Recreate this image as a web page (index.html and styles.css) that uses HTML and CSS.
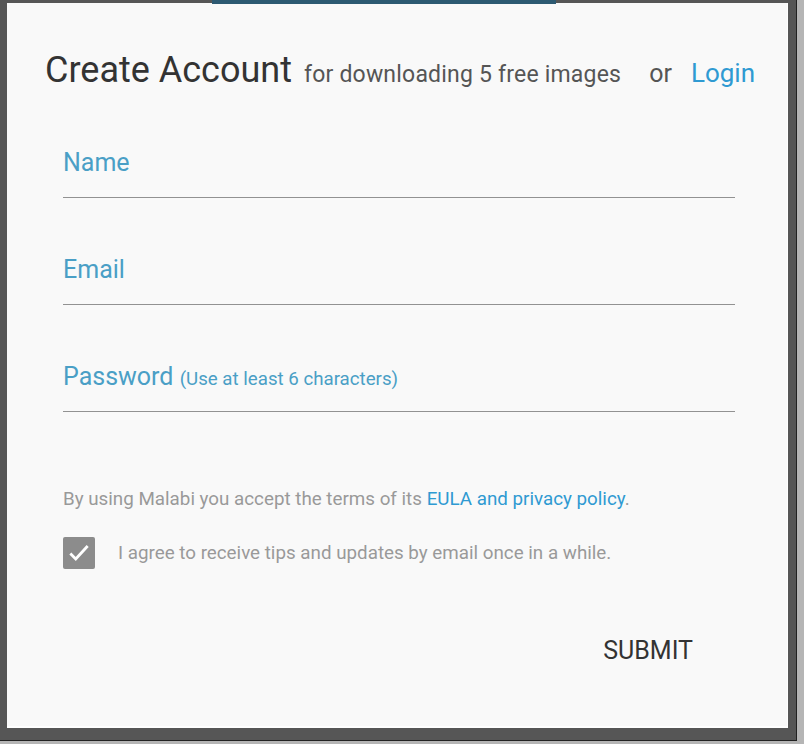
FILE: index.html
```html
<!DOCTYPE html>
<html lang="en">
<head>
  <meta charset="UTF-8">
  <meta name="viewport" content="width=device-width, initial-scale=1.0">
  <title>Create Account</title>
  <link rel="stylesheet" href="styles.css">
</head>
<body>
  <div class="frame">
    <div class="peek"></div>
    <div class="modal">
      <div class="header">
        <h1>Create Account</h1>
        <span class="subtitle">for downloading 5 free images</span>
        <span class="or">or</span>
        <a class="login" href="#">Login</a>
      </div>

      <div class="field">
        <label>Name</label>
      </div>
      <div class="field">
        <label>Email</label>
      </div>
      <div class="field">
        <label>Password <small>(Use at least 6 characters)</small></label>
      </div>

      <p class="terms">By using Malabi you accept the terms of its <a href="#">EULA and privacy policy</a>.</p>

      <div class="agree">
        <span class="checkbox">
          <svg width="26" height="26" viewBox="0 0 24 24"><path d="M4 12.5l5 5L20 5.5" fill="none" stroke="#fff" stroke-width="2.6"/></svg>
        </span>
        <span>I agree to receive tips and updates by email once in a while.</span>
      </div>

      <div class="actions">
        <button>SUBMIT</button>
      </div>
    </div>
  </div>
</body>
</html>
```

FILE: styles.css
```css
html, body {
  margin: 0;
  padding: 0;
  height: 100%;
}
body {
  font-family: Roboto, "Liberation Sans", Arial, sans-serif;
  background-color: #b5b5b5;
  position: relative;
  overflow: hidden;
}
.frame {
  position: absolute;
  top: 0;
  left: 0;
  width: 797px;
  height: 741px;
  padding: 3px 8px 12px 7px;
  box-sizing: border-box;
  background-color: #565656;
  border-right: 1px solid #222;
  border-bottom: 1px solid #222;
}
.peek {
  position: absolute;
  top: 0;
  left: 212px;
  width: 344px;
  height: 4px;
  background-color: #2d5a72;
}
.modal {
  background-color: #f9f9f9;
  height: 100%;
  box-sizing: border-box;
  padding: 46px 52px 0 38px;
  border-right: 1px solid #fff;
  border-bottom: 2px solid #fff;
}
.header {
  display: flex;
  align-items: baseline;
  white-space: nowrap;
}
h1 {
  font-size: 36px;
  font-weight: 400;
  color: #333;
  margin: 0;
}
.subtitle {
  font-size: 23px;
  letter-spacing: 0.2px;
  color: #555;
  margin-left: 12px;
}
.or {
  font-size: 25px;
  color: #555;
  margin-left: 28px;
}
.login {
  font-size: 26px;
  color: #2f9ad2;
  text-decoration: none;
  margin-left: 19px;
}
.field {
  margin-left: 18px;
  padding: 57px 0 20px;
  border-bottom: 1.5px solid #929292;
}
label {
  display: block;
  font-size: 25px;
  color: #4a9fc6;
}
label small {
  font-size: 18.7px;
}
.terms {
  margin: 76px 0 0 18px;
  font-size: 18.8px;
  color: #999;
}
.terms a {
  color: #2f9ad2;
  text-decoration: none;
}
.agree {
  display: flex;
  align-items: center;
  margin: 27px 0 0 18px;
  font-size: 18.8px;
  color: #999;
}
.checkbox {
  width: 32px;
  height: 32px;
  border-radius: 2px;
  background-color: #8c8c8c;
  display: flex;
  align-items: center;
  justify-content: center;
  margin-right: 23px;
}
.actions {
  display: flex;
  justify-content: flex-end;
  margin-top: 67px;
}
button {
  background: none;
  border: none;
  font-family: inherit;
  font-size: 25px;
  color: #333;
  padding: 0;
  margin-right: 42px;
  cursor: pointer;
}
```
